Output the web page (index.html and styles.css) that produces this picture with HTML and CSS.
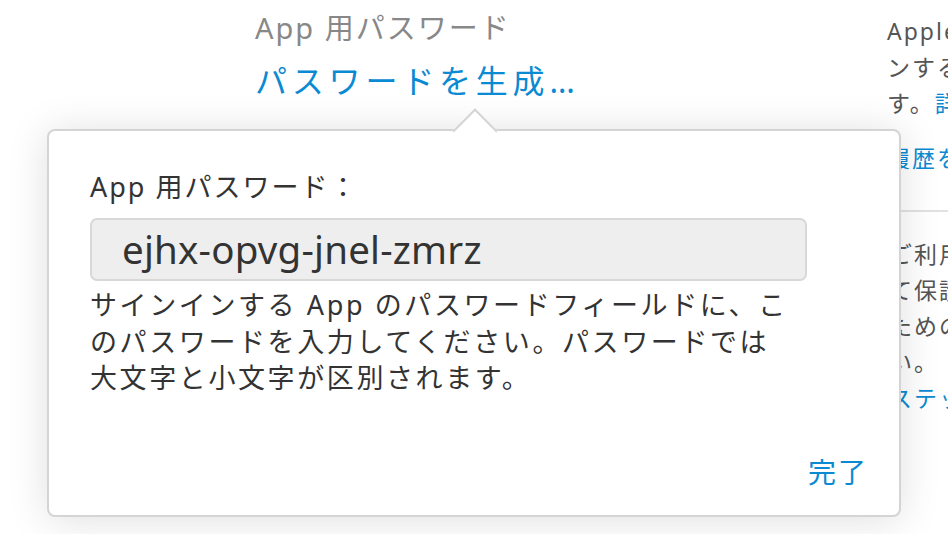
FILE: index.html
```html
<!DOCTYPE html>
<html lang="ja">
<head>
    <meta charset="UTF-8">
    <meta name="viewport" content="width=device-width, initial-scale=1.0">
    <title>App 用パスワード</title>
    <link rel="stylesheet" href="styles.css">
</head>
<body>
    <div class="page">
        <section class="main">
            <div class="field">
                <h2 class="field-title">App 用パスワード</h2>
                <a class="field-link" href="#">パスワードを生成…</a>
            </div>

            <!-- popover shown after generating -->
            <div class="popover">
                <span class="popover-arrow"></span>
                <div class="pw-label">App 用パスワード：</div>
                <div class="pw-box">ejhx-opvg-jnel-zmrz</div>
                <p class="pw-note">サインインする App のパスワードフィールドに、こ<br>のパスワードを入力してください。パスワードでは<br>大文字と小文字が区別されます。</p>
                <div class="popover-actions">
                    <a class="done" href="#">完了</a>
                </div>
            </div>
        </section>

        <aside class="side">
            <p class="side-text">Apple 以外から提供される App にサイ<br>ンするには App 用パスワードが必要で<br>す。<a href="#">詳しくはこちら</a></p>
            <p class="side-text"><a href="#">履歴を表示</a></p>
            <hr class="side-rule">
            <p class="side-text side-lower">ご利用の Apple ID は 2 ステップ確認によっ<br>て保護されています。アカウントを守る<br>ための設定を確認してくださ<br>い。<br><a href="#">ステップを管理</a></p>
        </aside>
    </div>
</body>
</html>
```

FILE: styles.css
```css
body {
    margin: 0;
    font-family: "Noto Sans", "Noto Sans CJK JP", sans-serif;
    color: #333;
    background: #fff;
    overflow: hidden;
}
a {
    color: #0a8ad2;
    text-decoration: none;
}
.page {
    display: flex;
    width: 948px;
    height: 534px;
    overflow: hidden;
}
.main {
    position: relative;
    flex: none;
    width: 887px;
}
.field {
    padding: 10px 0 0 255px;
}
.field-title {
    margin: 0;
    font-size: 29px;
    font-weight: normal;
    line-height: 36px;
    letter-spacing: 2px;
    color: #888;
}
.field-link {
    display: block;
    margin-top: 13px;
    font-size: 32px;
    line-height: 44px;
    letter-spacing: 4.8px;
}

/* popover */
.popover {
    position: absolute;
    top: 129px;
    left: 47px;
    z-index: 2;
    width: 854px;
    height: 388px;
    box-sizing: border-box;
    padding: 38px 31px 25px 41px;
    display: flex;
    flex-direction: column;
    background: #fff;
    border: 2px solid #d4d4d4;
    border-radius: 8px;
    box-shadow: 0 3px 40px rgba(0, 0, 0, 0.13);
}
.popover-arrow {
    position: absolute;
    top: -16px;
    left: 410px;
    width: 30px;
    height: 30px;
    background: #fff;
    border-top: 2px solid #d4d4d4;
    border-left: 2px solid #d4d4d4;
    transform: rotate(45deg);
}
.pw-label {
    font-size: 27px;
    line-height: 36px;
    letter-spacing: 2px;
}
.pw-box {
    width: 717px;
    height: 63px;
    box-sizing: border-box;
    margin-top: 13px;
    padding-left: 30px;
    background: #eee;
    border: 2px solid #d8d8d8;
    border-radius: 7px;
    font-size: 38.5px;
    line-height: 59px;
    letter-spacing: 0.2px;
    color: #333;
}
.pw-note {
    margin: 6px 0 0;
    font-size: 27px;
    line-height: 36.5px;
    letter-spacing: 2.6px;
}
.popover-actions {
    margin-top: auto;
    display: flex;
    justify-content: flex-end;
}
.done {
    font-size: 28px;
    line-height: 36px;
    letter-spacing: 2px;
}

/* right column */
.side {
    flex: none;
    width: 420px;
    color: #555;
}
.side-text {
    margin: 13px 0 0;
    font-size: 23px;
    line-height: 36px;
    letter-spacing: 2px;
    white-space: nowrap;
}
.side-text + .side-text {
    margin-top: 19px;
}
.side-rule {
    margin: 34px 0 0;
    border: none;
    border-top: 2px solid #e2e2e2;
}
.side-lower {
    margin-top: 24px;
    padding-left: 2px;
}
```
